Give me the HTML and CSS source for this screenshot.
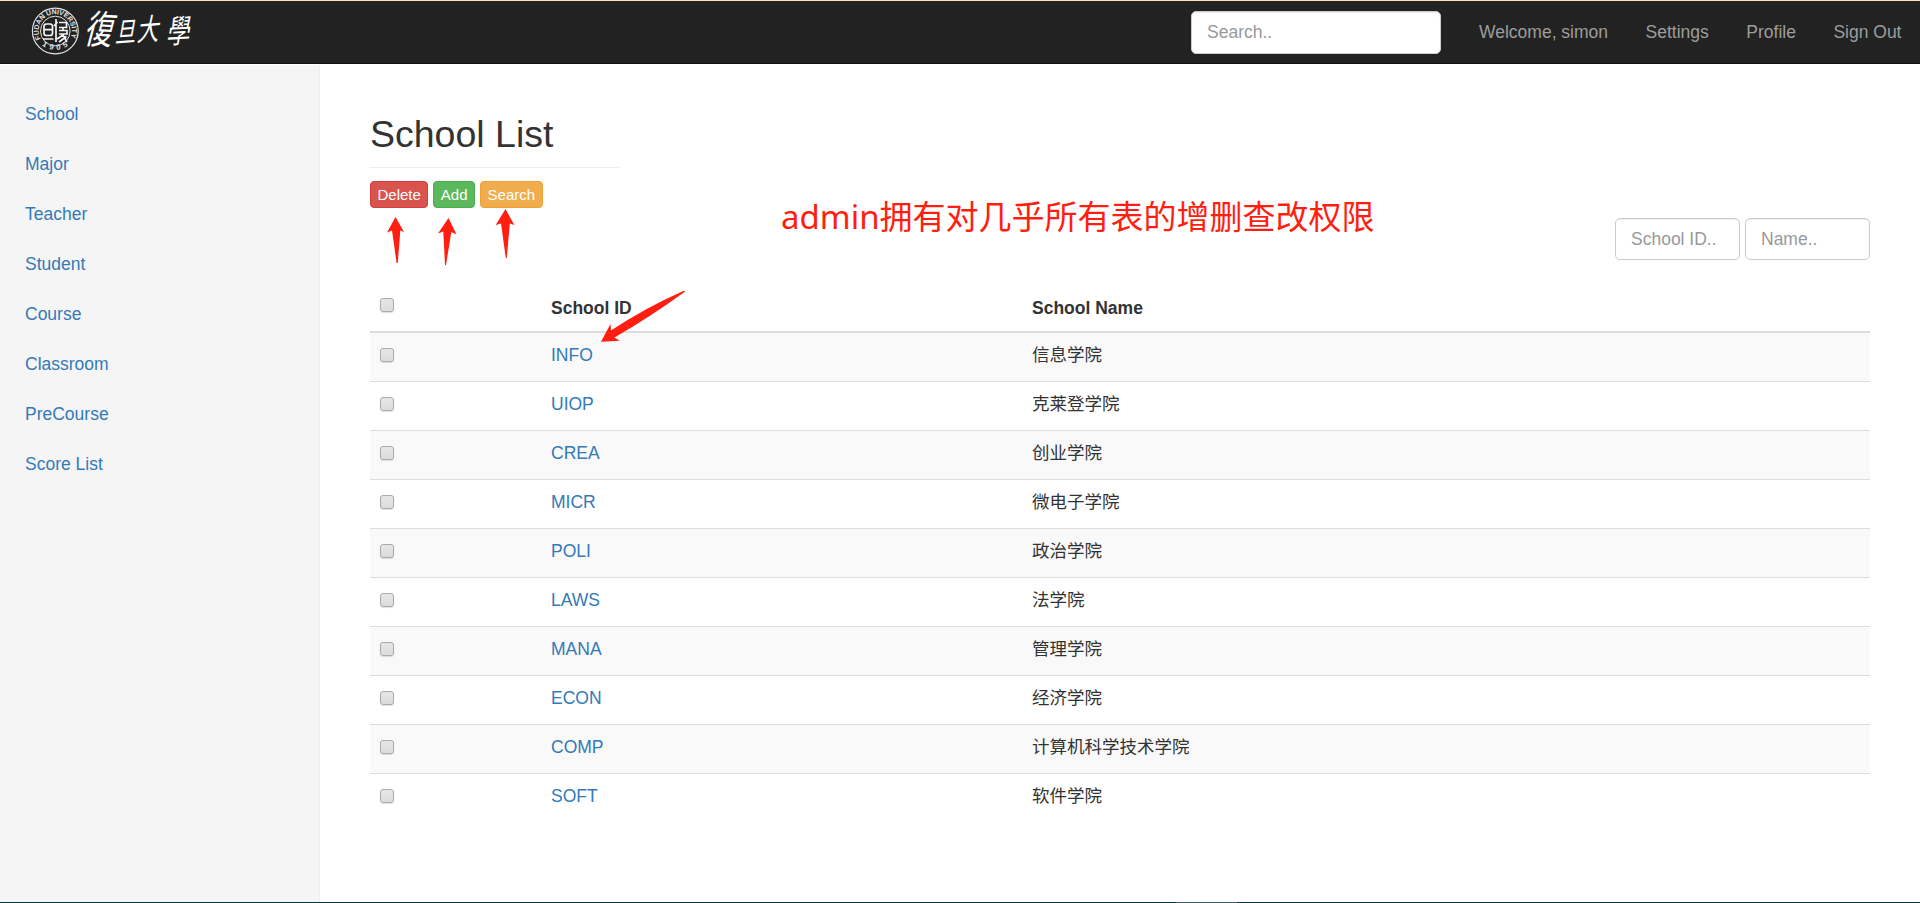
FILE: index.html
```html
<!DOCTYPE html>
<html lang="en">
<head>
<meta charset="utf-8">
<title>School List</title>
<link rel="stylesheet" href="styles.css">
</head>
<body>
<header class="navbar">
  <svg class="logo" width="170" height="52" viewBox="0 0 170 52">
    <defs>
      <path id="arc-top" d="M9.8 33.8A16.6 16.6 0 1 1 38.8 33.8"/>
      <path id="arc-bottom" d="M6.3 35A21.3 21.3 0 0 0 42.3 35"/>
    </defs>
    <g fill="none" stroke="#e4e4e4">
      <circle cx="24.3" cy="26" r="22.9" stroke-width="1.2"/>
      <circle cx="24.3" cy="26" r="14.8" stroke-width="1"/>
    </g>
    <g fill="#e4e4e4">
      <text class="seal-text" font-size="7"><textPath href="#arc-top" textLength="67" lengthAdjust="spacing">FUDAN UNIVERSITY</textPath></text>
      <text class="seal-text" font-size="7.6"><textPath href="#arc-bottom" startOffset="7" textLength="28" lengthAdjust="spacing">1905</textPath></text>
    </g>
    <g fill="none" stroke="#f4f4f4" stroke-width="1.7">
      <rect x="13" y="19" width="8.5" height="11.5" rx="2.5"/>
      <path d="M13 24.7H21.5M12 34H22.5M25 14V37M23 21L26.5 17M28 17.5H35.5V22.5H28M28 25.5H36V29H28M32 22.5V25.5M26 34L32 30L36 37M28 37L35.5 31.5"/>
    </g>
    <g class="brush" fill="#fff">
      <text transform="translate(52 38) rotate(3) skewX(-12) scale(.86 1.2)" font-size="33">復</text>
      <text transform="translate(83.8 37.5) rotate(-4) skewX(-14) scale(.8 1.05)" font-size="26">旦</text>
      <text transform="translate(105.5 36) rotate(-4) skewX(-14) scale(.85 1.15)" font-size="26">大</text>
      <text transform="translate(135 38.5) rotate(-3) skewX(-12) scale(.84 1.15)" font-size="28">學</text>
    </g>
  </svg>
  <input class="field nav-search" type="text" placeholder="Search..">
  <nav class="nav-links">
    <a>Welcome, simon</a><a>Settings</a><a>Profile</a><a>Sign Out</a>
  </nav>
</header>
<div class="page">
  <aside class="sidebar">
    <a>School</a><a>Major</a><a>Teacher</a><a>Student</a><a>Course</a><a>Classroom</a><a>PreCourse</a><a>Score List</a>
  </aside>
  <main class="main">
    <h2 class="title">School List</h2>
    <div class="actions">
      <button class="btn danger">Delete</button>
      <button class="btn success">Add</button>
      <button class="btn warning">Search</button>
    </div>
    <div class="filters">
      <input class="field" type="text" placeholder="School ID..">
      <input class="field" type="text" placeholder="Name..">
    </div>
    <table class="table">
      <colgroup><col class="col-check"><col class="col-id"><col></colgroup>
      <thead><tr><th><input class="check" type="checkbox"></th><th>School ID</th><th>School Name</th></tr></thead>
      <tbody>
        <tr><td><input class="check" type="checkbox"></td><td><a>INFO</a></td><td>信息学院</td></tr>
        <tr><td><input class="check" type="checkbox"></td><td><a>UIOP</a></td><td>克莱登学院</td></tr>
        <tr><td><input class="check" type="checkbox"></td><td><a>CREA</a></td><td>创业学院</td></tr>
        <tr><td><input class="check" type="checkbox"></td><td><a>MICR</a></td><td>微电子学院</td></tr>
        <tr><td><input class="check" type="checkbox"></td><td><a>POLI</a></td><td>政治学院</td></tr>
        <tr><td><input class="check" type="checkbox"></td><td><a>LAWS</a></td><td>法学院</td></tr>
        <tr><td><input class="check" type="checkbox"></td><td><a>MANA</a></td><td>管理学院</td></tr>
        <tr><td><input class="check" type="checkbox"></td><td><a>ECON</a></td><td>经济学院</td></tr>
        <tr><td><input class="check" type="checkbox"></td><td><a>COMP</a></td><td>计算机科学技术学院</td></tr>
        <tr><td><input class="check" type="checkbox"></td><td><a>SOFT</a></td><td>软件学院</td></tr>
      </tbody>
    </table>
  </main>
</div>
<footer class="edge"><span></span></footer>
<div class="note">admin拥有对几乎所有表的增删查改权限</div>
<svg class="arrows" width="320" height="150" viewBox="380 200 320 150" fill="#ff1e10">
  <path d="M395.5 217L404 232L400.3 230.5L397.8 263H396.6L392 230.5L387 232.5Z"/>
  <path d="M448.5 218L456.5 234.5L451.3 232L446 265H445L443.3 231.5L438 233.5Z"/>
  <path d="M505.5 209L514.3 225L509.8 223.5L506.8 258H505.8L501 223.5L495.7 225Z"/>
  <path d="M601 341.7L610.5 324L611 330.5Q645 308 683.8 290.8Q685.5 291 684.5 292Q650 317 614.5 337.5L619.7 340.8Z"/>
</svg>
</body>
</html>
```
FILE: styles.css
```css
* { box-sizing: border-box; }
body {
  margin: 0;
  height: 903px;
  display: flex;
  flex-direction: column;
  overflow: hidden;
  position: relative;
  background: #fff;
  color: #333;
  font: 17.5px/25px "Liberation Sans", "Noto Sans CJK SC", sans-serif;
}
a { color: #337ab7; text-decoration: none; }
.navbar {
  height: 64px;
  flex: none;
  display: flex;
  align-items: center;
  padding: 0 18.5px 0 31px;
  background: #222;
  border-top: 1px solid #ffdfb5;
  border-bottom: 1px solid #101010;
}
.logo { margin-right: auto; margin-top: -2px; display: block; overflow: visible; }
.seal-text { font-family: "Liberation Sans", sans-serif; font-weight: bold; }
.brush { font-family: "Noto Sans CJK TC", sans-serif; font-weight: 400; }
.field {
  width: 125px;
  height: 42px;
  padding: 7px 15px;
  font: inherit;
  background: #fff;
  border: 1px solid #ccc;
  border-radius: 5px;
  box-shadow: inset 0 1px 1px rgba(0, 0, 0, .075);
}
.field::placeholder { color: #999; opacity: 1; }
.nav-search { width: 250px; height: 43px; margin-right: 38px; }
.nav-links { display: flex; gap: 37.5px; }
.nav-links a { color: #9d9d9d; }
.page { flex: 1; display: flex; margin-top: 1px; min-height: 0; }
.sidebar {
  width: 320px;
  padding: 24px 0 0 25px;
  display: flex;
  flex-direction: column;
  background: #f5f5f5;
  border-right: 1px solid #eee;
}
.sidebar a { height: 50px; line-height: 50px; }
.main { flex: 1; padding: 48px 50px 0; }
.title {
  width: 250px;
  height: 55px;
  margin: 0 0 13px;
  font-size: 37.5px;
  font-weight: 400;
  line-height: 43px;
  border-bottom: 1px solid #eee;
}
.actions { display: flex; gap: 5px; height: 37px; }
.btn {
  height: 27px;
  padding: 0 6.5px;
  color: #fff;
  font: 15px/22px "Liberation Sans", sans-serif;
  border: 1px solid;
  border-radius: 4px;
}
.danger { background: #d9534f; border-color: #d43f3a; }
.success { background: #5cb85c; border-color: #4cae4c; }
.warning { background: #f0ad4e; border-color: #eea236; }
.filters { display: flex; justify-content: flex-end; gap: 5px; margin-bottom: 25px; }
.table { width: 100%; border-collapse: separate; border-spacing: 0; table-layout: fixed; }
.col-check { width: 171px; }
.col-id { width: 481px; }
th { height: 48px; padding: 10px; text-align: left; vertical-align: bottom; border-bottom: 2px solid #ddd; }
td { height: 49px; padding: 10px; vertical-align: top; border-top: 1px solid #ddd; }
tbody tr:first-child td { height: 48px; border-top: 0; }
tbody tr:nth-child(odd) { background: #f9f9f9; }
.check {
  appearance: none;
  display: block;
  width: 14px;
  height: 14px;
  margin: 5px 0 0;
  border: 1px solid #aaa;
  border-radius: 3px;
  background: linear-gradient(#e6e6e6, #dcdcdc);
  box-shadow: 0 1px 1px rgba(0, 0, 0, .12);
}
th .check { margin: 0 0 9px; }
.edge { height: 1px; flex: none; background: #003b40; }
.edge span { display: block; width: 61px; height: 1px; margin-left: 1176px; background: #3d6468; }
.note {
  position: absolute;
  left: 781px;
  top: 193px;
  color: #ff1e10;
  font: 33px/48px "Noto Sans", "Noto Sans CJK SC", sans-serif;
  white-space: nowrap;
}
.arrows { position: absolute; left: 380px; top: 200px; }
```
